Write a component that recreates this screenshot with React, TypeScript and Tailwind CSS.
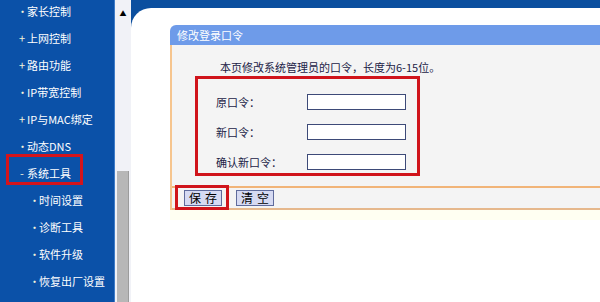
const font = { fontFamily: '"Noto Sans CJK SC", "Noto Sans", sans-serif' };

interface NavItem {
    bullet: string;
    label: string;
    sub?: boolean;
    marked?: boolean;
}

const navItems: NavItem[] = [
    {bullet: "•", label: "家长控制"},
    {bullet: "+", label: "上网控制"},
    {bullet: "+", label: "路由功能"},
    {bullet: "•", label: "IP带宽控制"},
    {bullet: "+", label: "IP与MAC绑定"},
    {bullet: "•", label: "动态DNS"},
    {bullet: "-", label: "系统工具", marked: true},
    {bullet: "•", label: "时间设置", sub: true},
    {bullet: "•", label: "诊断工具", sub: true},
    {bullet: "•", label: "软件升级", sub: true},
    {bullet: "•", label: "恢复出厂设置", sub: true},
];

function Sidebar() {
    return (
        <div className="w-[115px] h-full bg-[#0b51a8] overflow-hidden border-r border-[#3f7cc8]">
            <ul className="-mt-[2px]">
                {navItems.map((item) => (
                    <li
                        key={item.label}
                        className={`relative h-[27px] flex items-center text-white text-[11px] ${item.sub ? "pl-[29px]" : "pl-[17px]"}`}
                    >
                        <span className="w-[10px] shrink-0 text-center text-[#f4f4d8] text-[11px] leading-none">{item.bullet}</span>
                        <span className="whitespace-nowrap">{item.label}</span>
                        {item.marked && (
                            <span className="absolute left-[6px] -top-[6px] w-[77px] h-[31px] border-[3px] border-[#d4141c]"/>
                        )}
                    </li>
                ))}
            </ul>
        </div>
    );
}

function Scrollbar() {
    return (
        <div className="w-[16px] h-full bg-[#f1f2f7] flex flex-col items-center">
            <span className="mt-[10px] text-[7px] leading-none text-black">▲</span>
            <div className="mt-auto w-[12px] h-[131px] bg-[#b7b7b7] border-r border-[#9c9c9c]"/>
        </div>
    );
}

function Field({label}: Readonly<{ label: string }>) {
    return (
        <div className="flex items-center h-[16px]">
            <span className="w-[91px] text-[11px] text-[#1b2246]">{label}</span>
            <div className="w-[99px] h-[16px] bg-white border border-[#3d4a78]"/>
        </div>
    );
}

function Btn({label}: Readonly<{ label: string }>) {
    return (
        <button className="w-[38px] h-[16px] p-0 bg-[#d6daf2] border border-[#5f6b9c] flex items-center justify-center text-[12px] leading-none text-black gap-[4px]">
            {label.split("").map((ch) => (
                <span key={ch}>{ch}</span>
            ))}
        </button>
    );
}

function Panel() {
    return (
        <div className="ml-[39px] mt-[17px] flex-1 overflow-hidden">
            <div className="h-[20px] bg-[#6e9be9] rounded-tl-[6px] flex items-center pl-[7px] text-white text-[11px]">
                修改登录口令
            </div>
            <div className="bg-[#f4f4f4] border-l-2 border-[#f6c58e]">
                <div className="pt-[15px] pl-[48px] text-[11px] leading-[14px] text-[#1b2246]">
                    本页修改系统管理员的口令，长度为6-15位。
                </div>
                <div className="mt-[2px] ml-[23px] w-[225px] h-[100px] border-[3px] border-[#d0141b] pt-[15px] pl-[18px] flex flex-col gap-[14px]">
                    <Field label="原口令："/>
                    <Field label="新口令："/>
                    <Field label="确认新口令："/>
                </div>
                <div className="mt-[10px] border-t-2 border-b-2 border-t-[#f1b478] border-b-[#e6b88c] h-[24px] flex items-center gap-[14px] pl-[12px]">
                    <div className="relative">
                        <Btn label="保存"/>
                        <span className="absolute -left-[9px] -top-[5px] w-[54px] h-[25px] border-[3px] border-[#d0141b]"/>
                    </div>
                    <Btn label="清空"/>
                </div>
            </div>
            <div className="h-[10px] bg-[#fffff2]"/>
        </div>
    );
}

export default function App() {
    return (
        <div className="w-[600px] h-[302px] flex overflow-hidden bg-white" style={font}>
            <Sidebar/>
            <Scrollbar/>
            <div className="flex-1 h-full bg-[#0b4f9f] flex flex-col">
                <div className="mt-[8px] flex-1 bg-white rounded-tl-[20px] flex">
                    <Panel/>
                </div>
            </div>
        </div>
    );
}
